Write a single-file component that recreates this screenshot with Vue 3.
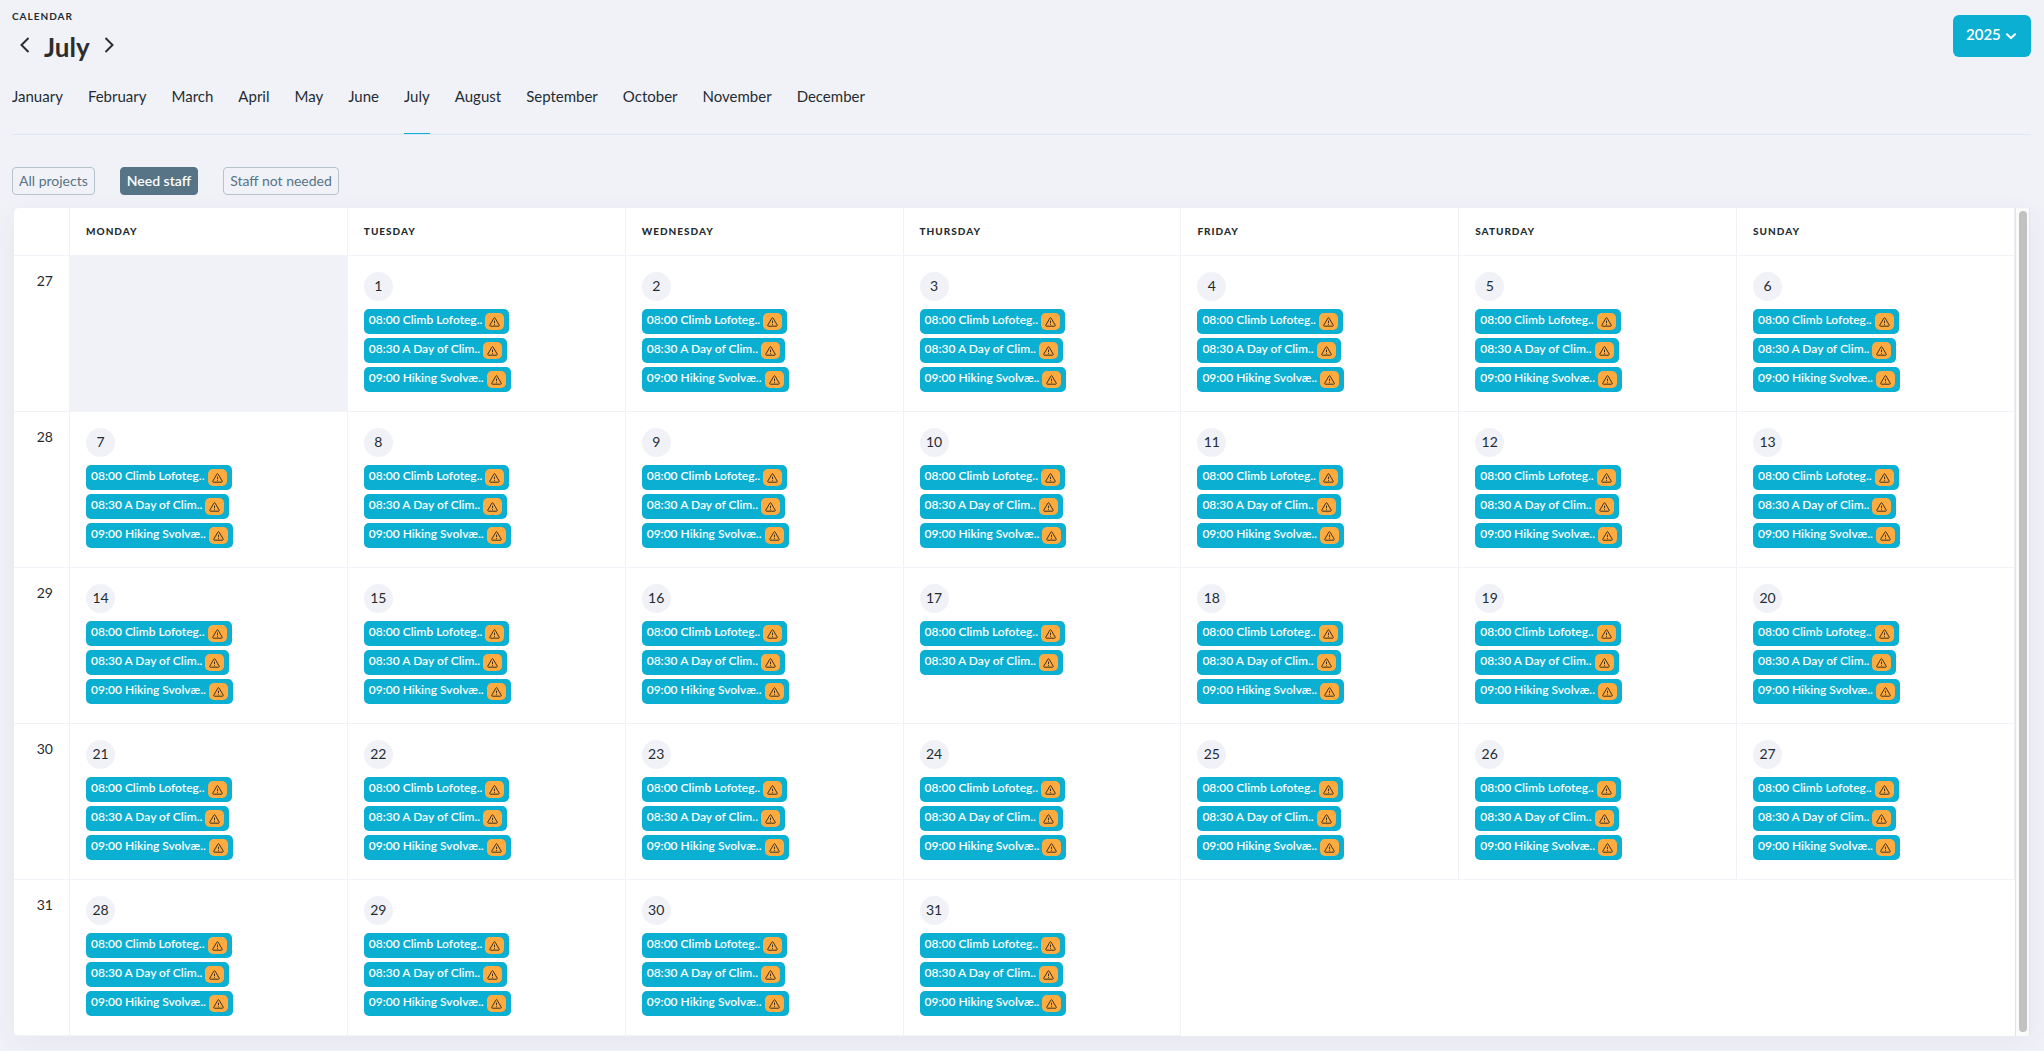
<script setup>
import { ref, computed } from 'vue'

const months = ['January', 'February', 'March', 'April', 'May', 'June', 'July', 'August', 'September', 'October', 'November', 'December']
const weekdays = ['Monday', 'Tuesday', 'Wednesday', 'Thursday', 'Friday', 'Saturday', 'Sunday']
const filters = ['All projects', 'Need staff', 'Staff not needed']

const month = ref('July')
const filter = ref('Need staff')
const year = ref('2025')

const tours = ['08:00 Climb Lofoteg..', '08:30 A Day of Clim..', '09:00 Hiking Svolvæ..']

const weeks = computed(() =>
  [27, 28, 29, 30, 31].map((number, row) => ({
    number,
    days: weekdays.map((_, col) => {
      const day = row * 7 + col
      if (day < 1) return { kind: 'before', events: [] }
      if (day > 31) return { kind: 'after', events: [] }
      return { kind: 'day', day, events: day === 17 ? tours.slice(0, 2) : tours }
    })
  }))
)

function step(by) {
  const next = (months.indexOf(month.value) + by + 12) % 12
  month.value = months[next]
}
</script>

<template>
  <main class="page">
    <header class="top">
      <div>
        <p class="eyebrow">Calendar</p>
        <div class="title">
          <button class="arrow" type="button" aria-label="Previous month" @click="step(-1)">
            <svg width="10" height="16" viewBox="0 0 10 16"><path d="M8.5 1 1.5 8l7 7" /></svg>
          </button>
          <h1>{{ month }}</h1>
          <button class="arrow" type="button" aria-label="Next month" @click="step(1)">
            <svg width="10" height="16" viewBox="0 0 10 16"><path d="m1.5 1 7 7-7 7" /></svg>
          </button>
        </div>
      </div>
      <div class="year">
        <select v-model="year" aria-label="Year">
          <option>2025</option>
        </select>
        <svg class="chevron" width="10" height="7" viewBox="0 0 10 7"><path d="m1 1.2 4 4 4-4" /></svg>
      </div>
    </header>

    <nav class="months" aria-label="Months">
      <a v-for="m in months" :key="m" href="#" :class="{ active: m === month }" @click.prevent="month = m">{{ m }}</a>
    </nav>

    <div class="filters">
      <button v-for="f in filters" :key="f" type="button" :class="{ active: f === filter }" @click="filter = f">{{ f }}</button>
    </div>

    <section class="card">
      <table>
        <thead>
          <tr>
            <th class="week" aria-label="Week"></th>
            <th v-for="d in weekdays" :key="d" scope="col">{{ d }}</th>
          </tr>
        </thead>
        <tbody>
          <tr v-for="w in weeks" :key="w.number">
            <th class="week" scope="row">{{ w.number }}</th>
            <td v-for="(d, i) in w.days" :key="i" :class="d.kind">
              <span v-if="d.day" class="date">{{ d.day }}</span>
              <ul v-if="d.events.length">
                <li v-for="e in d.events" :key="e">
                  <a href="#" class="event">
                    <span>{{ e }}</span>
                    <i class="warn">
                      <svg width="11" height="10" viewBox="0 0 11 10">
                        <path d="M4.9 1.1.8 8.1a.7.7 0 0 0 .6 1.1h8.2a.7.7 0 0 0 .6-1.1l-4.1-7a.7.7 0 0 0-1.2 0ZM5.5 3.6v2.6M5.5 7.2v.9" />
                      </svg>
                    </i>
                  </a>
                </li>
              </ul>
            </td>
          </tr>
        </tbody>
      </table>
      <div class="track" aria-hidden="true"><div class="thumb"></div></div>
    </section>
  </main>
</template>

<style>
body {
  background: #f1f2f8;
}
</style>

<style scoped>
.page {
  padding: 8px 13px 14px 12px;
  font-family: Lato, sans-serif;
  color: #1f2d33;
}
.top {
  display: flex;
  justify-content: space-between;
  align-items: flex-start;
}
.eyebrow {
  margin: 0;
  font-size: 10px;
  line-height: 16px;
  font-weight: 700;
  letter-spacing: 1px;
  text-transform: uppercase;
}
.title {
  display: flex;
  align-items: center;
  gap: 14px;
  padding-left: 8px;
  color: #2d2d2d;
}
h1 {
  margin: 0;
  padding-top: 2px;
  font-size: 26px;
  line-height: 42px;
  font-weight: 700;
}
.arrow {
  display: flex;
  padding: 0;
  margin-bottom: 2px;
  border: 0;
  background: none;
  color: inherit;
}
.arrow svg,
.chevron {
  fill: none;
  stroke: currentColor;
  stroke-width: 2;
}
.year {
  position: relative;
  margin-top: 7px;
  color: #fff;
}
.year select {
  appearance: none;
  display: block;
  width: 78px;
  height: 42px;
  padding: 0 26px 4px 13px;
  border: 0;
  border-radius: 6px;
  background: #0aafd1;
  color: inherit;
  font: 600 15px Lato, sans-serif;
}
.chevron {
  position: absolute;
  right: 15px;
  top: 18px;
  pointer-events: none;
  stroke-linecap: round;
}
.months {
  display: flex;
  gap: 25px;
  margin-top: 14px;
  border-bottom: 1px solid #dce8f5;
}
.months a {
  padding: 3px 0 25px;
  border-bottom: 1px solid transparent;
  color: inherit;
  font-size: 15px;
  line-height: 23px;
  text-decoration: none;
}
.months a.active {
  border-bottom-color: #0aafd1;
}
.filters {
  display: flex;
  gap: 25px;
  margin: 32px 0 13px;
}
.filters button {
  height: 28px;
  padding: 0 6px 2px;
  border: 1px solid #b5c4ca;
  border-radius: 4px;
  background: none;
  color: #567485;
  font: 400 14px Lato, sans-serif;
}
.filters button.active {
  border-color: #567485;
  background: #567485;
  color: #fff;
  font-weight: 600;
}
.card {
  display: flex;
  margin: 0 1px 0 2px;
  border-radius: 5px 0 0 5px;
  background: #fff;
  box-shadow: 0 8px 30px rgba(60, 70, 110, 0.06);
}
table {
  flex: 1;
  table-layout: fixed;
  border-collapse: separate;
  border-spacing: 0;
}
th,
td {
  box-sizing: border-box;
  border: solid #f1f2f7;
  border-width: 0 1px 1px 0;
  padding: 0 16px;
  text-align: left;
  vertical-align: top;
}
thead th {
  height: 48px;
  padding-bottom: 2px;
  font-size: 10px;
  font-weight: 900;
  letter-spacing: 1px;
  text-transform: uppercase;
  vertical-align: middle;
}
th.week {
  width: 56px;
}
tbody th {
  padding-top: 15px;
  font-size: 14px;
  line-height: 20px;
  font-weight: 400;
  text-align: right;
}
td {
  height: 156px;
  padding-top: 16px;
}
td.before {
  background: #f1f2f7;
}
td.after {
  border-color: transparent;
}
.date {
  display: block;
  width: 29px;
  padding-bottom: 2px;
  border-radius: 50%;
  background: #f1f2f8;
  font-size: 14px;
  line-height: 27px;
  text-align: center;
}
ul {
  display: flex;
  flex-direction: column;
  align-items: flex-start;
  gap: 4px;
  margin: 8px 0 0;
  padding: 0;
  list-style: none;
}
.event {
  display: flex;
  align-items: center;
  gap: 3px;
  height: 25px;
  padding: 0 5px;
  border-radius: 5px;
  background: #0aafd1;
  color: #fff;
  font-size: 12px;
  line-height: 20px;
  font-weight: 600;
  text-decoration: none;
  white-space: nowrap;
}
.event span {
  padding-bottom: 4px;
}
.warn {
  display: flex;
  align-items: center;
  justify-content: center;
  width: 19px;
  height: 17px;
  border-radius: 5px;
  background: #ffab40;
}
.warn svg {
  fill: none;
  stroke: #40331f;
  stroke-linejoin: round;
}
.track {
  box-sizing: border-box;
  display: flex;
  width: 15px;
  padding: 3px 2px 4px 3px;
  border: solid #e4e4e8;
  border-width: 0 1px;
  background: #fafafa;
}
.thumb {
  flex: 1;
  border-radius: 4px;
  background: #c1c1c1;
}
</style>
